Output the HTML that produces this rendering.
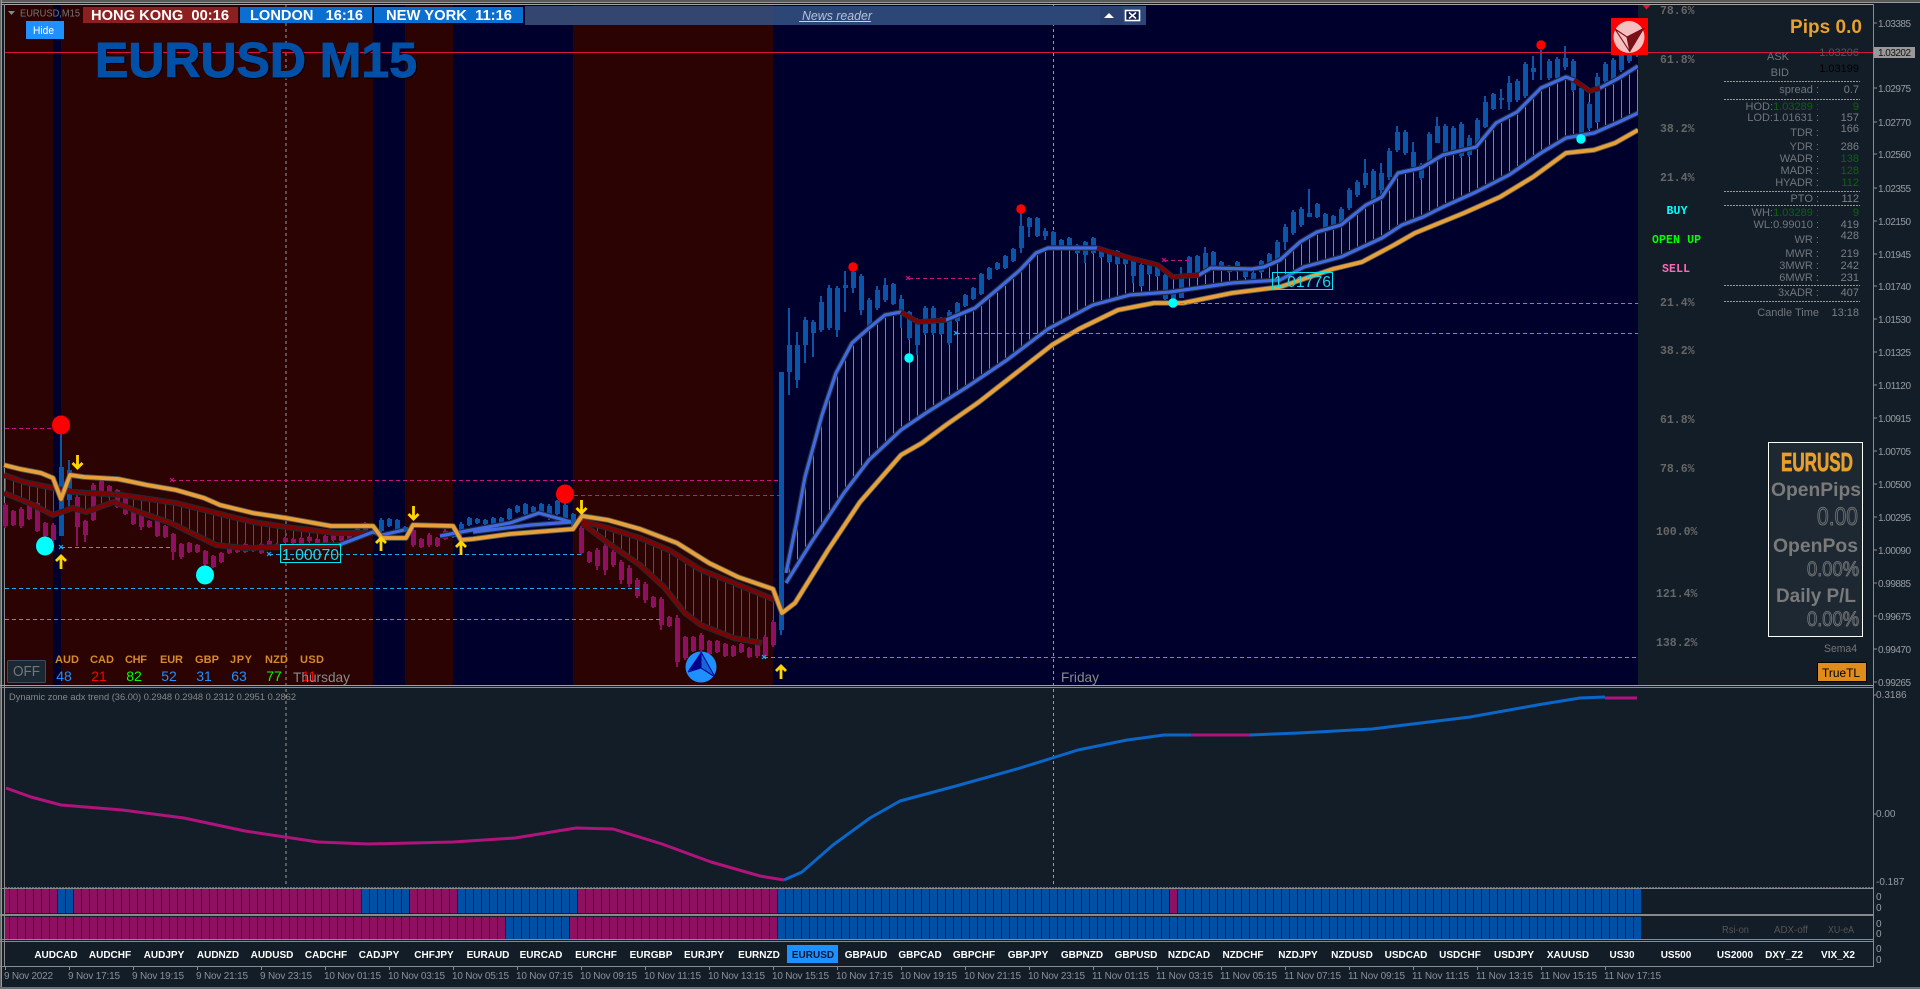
<!DOCTYPE html>
<html><head><meta charset="utf-8"><title>EURUSD M15</title>
<style>
html,body{margin:0;padding:0;background:#131d27;overflow:hidden}
svg{display:block}
text{font-family:"Liberation Sans",Arial,sans-serif;white-space:pre}
.ax{font-size:10px;fill:#979ca2}
.lb{font-size:11px;fill:#71767c;text-anchor:end}
.v{font-size:11px;fill:#7a7f85;text-anchor:end}
.g{fill:#0a640a}
.fb{font-family:"Liberation Mono",monospace;font-size:11.5px;fill:#666;font-weight:bold}
.sg{font-family:"Liberation Mono",monospace;font-size:11.5px;font-weight:bold}
.p{font-size:10px;font-weight:bold;fill:#fff;text-anchor:middle}
.t{font-size:10px;fill:#8b9096}
.cc{font-size:11px;font-weight:bold;fill:#d68a2e}
.cv{font-size:14px;text-anchor:middle}
.bar{font-size:14.5px;font-weight:bold;fill:#fff}
.big{font-weight:bold;fill:#7a7a7a}
.lcd{fill:#2a343e;stroke:#7d7d7d;stroke-width:.8}
</style></head>
<body>
<svg width="1920" height="989" viewBox="0 0 1920 989" xmlns="http://www.w3.org/2000/svg">
<defs>
<pattern id="hr" width="8" height="8" patternUnits="userSpaceOnUse"><rect x="5" width="1" height="8" fill="#c81e32"/></pattern>
<pattern id="hc" width="8" height="8" patternUnits="userSpaceOnUse"><rect x="5" width="1" height="8" fill="#1ea8e0"/></pattern>
<pattern id="gap" width="8" height="8" patternUnits="userSpaceOnUse"><rect x="1" width="1" height="8" fill="#131d27"/></pattern>
<path id="up" d="M0 7V-6M-5 -1L0 -6L5 -1" fill="none" stroke="#ffd700" stroke-width="2.8"/>
<path id="dn" d="M0 -7V6M-5 1L0 6L5 1" fill="none" stroke="#ffd700" stroke-width="2.8"/>
<path id="oA" d="M4 465L20 469 41 473 53 478 61 499 70 475 84 477 118 479 147 485 176 490 204 498 220 505 253 513 286 518 331 526 373 526 382 538 406 538 413 525 453 526 461 540 473 539 510 534 573 529 582 516 608 520 640 529 677 543 709 563 738 577 773 589 782 613 795 603 828 550 860 502 901 455 922 443 946 425 979 402 1020 370 1052 345 1079 329 1118 310 1154 303 1183 303 1232 293 1280 287 1333 269 1362 262 1394 245 1415 233 1464 213 1500 197 1533 177 1566 153 1594 150 1615 143 1638 130"/>
<path id="mU1" d="M4 475L24 482 53 488 73 492 122 495 176 503 212 512 253 522 286 527 335 533 373 533"/>
<path id="mL1" d="M4 493L29 503 53 515 73 508 86 512 114 502 139 512 171 523 216 545 245 548 286 547 339 545"/>
<path id="mU2" d="M582 521L608 528 640 538 669 550 701 570 734 583 775 600"/>
<path id="mL2" d="M582 523L608 543 640 565 664 587 685 613 701 625 734 638 762 643"/>
<path id="bL" d="M786 583L811 543 844 493 869 460 901 430 926 413 967 387 1007 360 1048 329 1093 305 1130 295 1170 292 1232 283 1280 280 1304 267 1341 257 1382 238 1402 225 1423 217 1443 207 1476 192 1509 175 1541 153 1566 138 1594 133 1619 122 1638 113"/>
<path id="bU" d="M786 573L797 520 805 477 822 415 836 373 852 343 869 328 885 315 901 312 918 322 946 320 975 308 999 288 1020 270 1036 253 1048 248 1097 248 1130 258 1158 265 1173 277 1199 275 1211 268 1252 269 1264 267 1280 260 1300 242 1317 232 1341 225 1366 205 1382 197 1398 173 1421 168 1443 155 1476 147 1496 123 1517 112 1541 88 1566 77 1574 80 1590 91 1600 88 1619 78 1638 66"/>
<path id="bS" d="M339 545L373 532 382 535 404 530M440 536L461 532 510 523 539 513 571 522M473 532L531 525 571 522"/>
</defs>

<!-- window -->
<rect width="1920" height="989" fill="#131d27"/>
<rect width="1920" height="2" fill="#5a5a5a"/>
<rect y="2" width="1920" height="1" fill="#999"/>
<rect y="4" width="1873" height="1" fill="#a5a5a5"/>
<rect width="1" height="989" fill="#666"/>
<rect x="1" width="1" height="989" fill="#999"/>
<rect x="4" y="4" width="1" height="962" fill="#8a8a8a"/>
<rect y="987" width="1920" height="2" fill="#6a7076"/>

<!-- sessions -->
<rect x="5" y="5" width="768" height="680" fill="#2b0303"/>
<rect x="53" y="5" width="8" height="680" fill="#00002c"/>
<rect x="373" y="5" width="32" height="680" fill="#00002c"/>
<rect x="453" y="5" width="120" height="680" fill="#00002c"/>
<rect x="773" y="5" width="865" height="680" fill="#00002c"/>

<!-- period separators -->
<path d="M286 5V887M1053.5 5V887" stroke="#9a9a9a" stroke-width="1" stroke-dasharray="3 3" fill="none"/>

<!-- histogram -->
<path d="M4 475L24 482 53 488 73 492 122 495 176 503 212 512 253 522 286 527 335 533 373 533 373 533 339 545 286 547 245 548 216 545 171 523 139 512 114 502 86 512 73 508 53 515 29 503 4 493Z" fill="url(#hr)"/>
<path d="M582 521L608 528 640 538 669 550 701 570 734 583 775 600 775 644 762 643 734 638 701 625 685 613 664 587 640 565 608 543 582 523Z" fill="url(#hr)"/>
<path d="M786 573L797 520 805 477 822 415 836 373 852 343 869 328 885 315 901 312 918 322 946 320 975 308 999 288 1020 270 1036 253 1048 248 1097 248 1130 258 1158 265 1173 277 1199 275 1211 268 1252 269 1264 267 1280 260 1300 242 1317 232 1341 225 1366 205 1382 197 1398 173 1421 168 1443 155 1476 147 1496 123 1517 112 1541 88 1566 77 1574 80 1590 91 1600 88 1619 78 1638 66 1638 113 1619 122 1594 133 1566 138 1541 153 1509 175 1476 192 1443 207 1423 217 1402 225 1382 238 1341 257 1304 267 1280 280 1232 283 1170 292 1130 295 1093 305 1048 329 1007 360 967 387 926 413 901 430 869 460 844 493 811 543 786 583Z" fill="url(#hc)"/>

<g shape-rendering="crispEdges">
<!-- purple candles wicks -->
<path stroke="#8f1060" stroke-width="2" fill="none" d="M5 503V528M13 510V526M21 507V528M29 500V520M37 502V532M45 522V538M53 523V542M77 493V546M85 520V542M93 483V521M101 480V493M109 485V498M117 489V508M125 497V515M133 510V525M141 510V530M149 520V528M157 517V537M165 525V538M173 533V560M181 543V559M189 542V553M197 544V553M205 550V566M213 555V568M221 552V563M229 545V554M237 545V553M245 543V553M253 546V552M261 543V554M269 540V547M277 543V548M285 537V543M293 538V544M301 537V546M309 536V542M317 538V545M325 535V545M333 532V541M341 533V542M349 533V540M357 528V536M365 522V532M413 528V547M421 538V548M429 533V547M437 537V547M445 529V540M581 526V555M589 551V563M597 548V570M605 543V575M613 550V567M621 560V584M629 565V587M637 578V598M645 582V603M653 596V608M661 597V630M669 616V627M677 615V667M685 636V660M693 636V652M701 633V652M709 640V655M717 640V653M725 643V657M733 645V657M741 643V653M749 647V658M757 642V658M765 635V658M773 620V647"/>
<!-- purple bodies -->
<path transform="translate(.5 0)" stroke="#8f1060" stroke-width="5" fill="none" d="M5 505V526M13 511V525M21 509V526M29 501V519M37 503V531M45 523V536M53 525V540M77 497V527M85 521V535M93 485V520M101 481V492M109 486V497M117 490V507M125 498V514M133 511V524M141 512V527M149 521V527M157 518V536M165 526V537M173 534V552M181 544V557M189 543V552M197 545V552M205 551V564M213 556V567M221 553V562M229 546V553M237 546V552M245 544V552M253 547V551M261 544V553M269 541V546M277 544V547M285 538V542M293 539V543M301 538V545M309 537V541M317 539V544M325 536V544M333 533V540M341 534V541M349 534V539M357 529V535M365 523V531M413 530V545M421 539V547M429 535V545M437 538V546M445 531V539M581 528V553M589 552V562M597 550V566M605 546V570M613 552V565M621 562V580M629 568V584M637 580V596M645 584V600M653 597V607M661 599V625M669 617V626M677 618V662M685 637V658M693 637V651M701 635V650M709 641V654M717 641V652M725 644V656M733 646V656M741 644V652M749 648V657M757 644V656M765 637V656M773 622V645"/>
<!-- blue candles wicks -->
<path stroke="#0a55a8" stroke-width="2" fill="none" d="M61 425V536M69 460V510M381 518V533M389 518V527M397 519V534M405 526V532M453 533V538M461 522V543M469 517V526M477 518V524M485 519V525M493 517V526M501 517V523M509 508V520M517 505V513M525 503V515M533 506V513M541 503V515M549 504V520M557 500V515M565 503V520M573 513V532M781 372V635M789 308V395M797 332V388M805 317V363M813 320V357M821 296V332M829 285V330M837 286V337M845 271V312M853 263V293M861 274V315M869 298V330M877 286V310M885 278V302M893 283V305M901 295V328M909 311V340M917 318V355M925 306V335M933 306V335M941 317V335M949 310V345M957 302V322M965 294V307M973 287V300M981 273V295M989 267V280M997 262V270M1005 255V269M1013 248V262M1021 213V253M1029 217V237M1037 217V237M1045 228V240M1053 231V248M1061 239V250M1069 237V249M1077 244V254M1085 241V263M1093 237V254M1101 247V258M1109 251V263M1117 250V265M1125 254V265M1133 259V283M1141 264V287M1149 260V275M1157 265V277M1165 274V300M1173 290V300M1181 267V298M1189 256V277M1197 255V275M1205 247V275M1213 251V268M1221 261V271M1229 265V273M1237 261V272M1245 269V278M1253 272V281M1261 260V273M1269 253V267M1277 240V263M1285 224V250M1293 210V235M1301 207V227M1309 189V217M1317 203V218M1325 213V230M1333 215V230M1341 207V227M1349 188V210M1357 180V197M1365 159V188M1373 169V202M1381 163V197M1389 148V180M1397 126V152M1405 130V155M1413 142V168M1421 163V180M1429 132V163M1437 117V143M1445 124V155M1453 126V155M1461 122V158M1469 135V157M1477 118V147M1485 96V128M1493 93V110M1501 89V109M1509 76V110M1517 79V102M1525 62V98M1533 56V80M1541 50V80M1549 59V80M1557 57V80M1565 46V70M1573 59V92M1581 86V135M1589 102V130M1597 73V123M1605 62V83M1613 58V85M1621 47V72M1629 43V63M1637 37V57"/>
<!-- blue bodies -->
<path transform="translate(.5 0)" stroke="#0a55a8" stroke-width="5" fill="none" d="M61 467V536M69 470V500M381 520V531M389 519V526M397 520V533M405 527V531M453 534V537M461 524V533M469 518V525M477 519V523M485 520V524M493 518V525M501 518V522M509 509V519M517 506V512M525 504V514M533 507V512M541 504V514M549 506V518M557 501V514M565 505V518M573 514V530M781 372V630M789 345V372M797 345V380M805 320V345M813 322V333M821 302V330M829 288V328M837 288V330M845 285V288M853 272V288M861 276V310M869 300V328M877 290V308M885 285V300M893 284V304M901 299V312M909 312V338M917 322V345M925 308V333M933 308V333M941 318V334M949 312V343M957 303V321M965 295V306M973 288V299M981 274V294M989 268V279M997 263V269M1005 256V268M1013 249V261M1021 226V248M1029 218V227M1037 218V236M1045 231V236M1053 232V247M1061 240V249M1069 238V248M1077 245V253M1085 242V255M1093 238V253M1101 248V257M1109 252V262M1117 251V264M1125 255V264M1133 260V276M1141 265V286M1149 261V274M1157 266V276M1165 275V299M1173 291V299M1181 274V298M1189 257V276M1197 256V274M1205 253V270M1213 252V267M1221 262V270M1229 266V272M1237 262V271M1245 270V277M1253 273V280M1261 261V272M1269 254V266M1277 242V261M1285 227V242M1293 212V233M1301 209V225M1309 213V217M1317 204V217M1325 214V229M1333 216V229M1341 209V225M1349 190V208M1357 182V195M1365 173V185M1373 171V200M1381 173V190M1389 151V177M1397 132V150M1405 132V153M1413 152V167M1421 165V178M1429 134V161M1437 126V143M1445 126V153M1453 128V153M1461 124V156M1469 138V155M1477 120V145M1485 102V127M1493 94V109M1501 98V100M1509 83V102M1517 81V100M1525 64V96M1533 68V72M1549 61V78M1557 59V78M1565 58V67M1573 61V90M1581 88V133M1589 104V128M1597 77V122M1605 64V81M1613 60V83M1621 50V70M1629 45V61M1637 39V55"/>
</g>

<!-- maroon MAs -->
<g fill="none" stroke-linejoin="round">
<g stroke="#1f2a30" stroke-width="6"><use href="#mU1"/><use href="#mL1"/><use href="#mU2"/><use href="#mL2"/></g>
<g stroke="#800000" stroke-width="3.6"><use href="#mU1"/><use href="#mL1"/><use href="#mU2"/><use href="#mL2"/></g>
<!-- blue MAs -->
<g stroke="#1f2a3a" stroke-width="5.5"><use href="#bU"/><use href="#bL"/><use href="#bS"/></g>
<g stroke="#4169e1" stroke-width="3.2"><use href="#bU"/><use href="#bL"/><use href="#bS"/></g>
<!-- maroon sections of upper line -->
<path d="M901 312L918 322 946 320M1097 248L1130 258 1158 265 1173 277 1199 275M1574 80L1590 91 1600 88" stroke="#800000" stroke-width="3.6"/>
<!-- orange -->
<use href="#oA" stroke="#5a5a50" stroke-width="5.5"/>
<use href="#oA" stroke="#e8a03a" stroke-width="3.8"/>
</g>

<!-- dashed levels -->
<g fill="none" stroke-width="1" stroke-dasharray="4 3">
<g stroke="#c8147f"><path d="M5 428.5H61M172 480.5H781M574 495.5H781M909 278.5H979M1164 260.5H1190"/></g>
<g stroke="#1eaaf0"><path d="M61 547.5H172M269 554.5H581M5 588.5H640M5 619.5H660M764 657.5H1650M956 333.5H1650M1173 303.5H1653"/></g>
</g>
<g stroke-width="1.2" fill="none">
<path stroke="#c8147f" d="M170 478l4 4m0-4l-4 4M906 276l4 4m0-4l-4 4M1162 258l4 4m0-4l-4 4"/>
<path stroke="#1eaaf0" d="M59 545l4 4m0-4l-4 4M267 552l4 4m0-4l-4 4M762 655l4 4m0-4l-4 4M954 331l4 4m0-4l-4 4"/>
</g>

<!-- bid line -->
<rect x="5" y="52" width="1868" height="1" fill="#dc143c"/>

<!-- dots -->
<g fill="#ff0000"><ellipse cx="61" cy="425" rx="9" ry="9.5"/><ellipse cx="565" cy="494" rx="9" ry="9.5"/><circle cx="853" cy="267" r="4.7"/><circle cx="1021" cy="209" r="4.7"/><circle cx="1541" cy="45" r="4.7"/></g>
<g fill="#00ffff"><ellipse cx="45" cy="546" rx="9" ry="9.5"/><ellipse cx="205" cy="575" rx="9" ry="9.5"/><circle cx="909" cy="358" r="4.7"/><circle cx="1173" cy="303" r="4.7"/><circle cx="1581" cy="139" r="4.7"/></g>

<!-- arrows -->
<use href="#dn" x="77.5" y="462"/><use href="#dn" x="413.5" y="513"/><use href="#dn" x="581.5" y="507"/>
<use href="#up" x="61" y="562"/><use href="#up" x="381" y="544"/><use href="#up" x="461" y="548"/><use href="#up" x="781" y="672"/>

<!-- price tags -->
<rect x="280.5" y="544.5" width="60" height="18" fill="none" stroke="#00e5ee"/>
<text x="282" y="560" font-size="16" fill="#19d9e6" textLength="57" lengthAdjust="spacingAndGlyphs">1.00070</text>
<rect x="1272.5" y="272.5" width="60" height="17" fill="none" stroke="#00e5ee"/>
<text x="1274" y="287" font-size="16" fill="#19d9e6" textLength="57" lengthAdjust="spacingAndGlyphs">1.01776</text>

<!-- blue logo -->
<circle cx="701" cy="667" r="15.5" fill="#1e90ff"/>
<path d="M701 652L688 671 701 668Z" fill="#00008b"/>
<path d="M701 652L715 677 701 668Z" fill="#1565d8" stroke="#00008b" stroke-width="1"/>
<path d="M688 672L701 668 715 677" stroke="#00008b" fill="none"/>

<!-- sidebar panel -->
<rect x="1638" y="5" width="235" height="680" fill="#131d27"/>
<rect x="1638" y="52" width="235" height="1" fill="#dc143c"/>
<path d="M1642.5 5H1650.6L1646.5 9.5Z" fill="#dc143c"/>

<!-- top-left -->
<path d="M8 11H15L11.5 15Z" fill="#888"/>
<text x="20" y="16.5" font-size="10" fill="#777" textLength="60" lengthAdjust="spacingAndGlyphs">EURUSD,M15</text>
<rect x="26" y="21" width="38" height="18" fill="#1e90ff"/>
<text x="33" y="34" font-size="11" fill="#fff" textLength="21" lengthAdjust="spacingAndGlyphs">Hide</text>
<text x="96" y="78" font-size="49" font-weight="bold" fill="#000" stroke="#000" stroke-width="1" textLength="322" lengthAdjust="spacingAndGlyphs">EURUSD M15</text>
<text x="95" y="77" font-size="49" font-weight="bold" fill="#0050a8" stroke="#0050a8" stroke-width="1" textLength="322" lengthAdjust="spacingAndGlyphs">EURUSD M15</text>

<!-- sessions bar -->
<rect x="83" y="7" width="155" height="16" fill="#8b2020"/>
<rect x="240" y="7" width="132" height="16" fill="#0a6fd0"/>
<rect x="374" y="7" width="149" height="16" fill="#0a6fd0"/>
<text class="bar" x="91" y="20" textLength="138" lengthAdjust="spacingAndGlyphs">HONG KONG  00:16</text>
<text class="bar" x="250" y="20" textLength="113" lengthAdjust="spacingAndGlyphs">LONDON   16:16</text>
<text class="bar" x="386" y="20" textLength="126" lengthAdjust="spacingAndGlyphs">NEW YORK  11:16</text>

<!-- news bar -->
<rect x="525" y="6" width="248" height="19" fill="#34466f"/>
<rect x="773" y="6" width="373" height="19" fill="#2d4678"/>
<rect x="1100" y="6" width="23" height="19" fill="#2a4070"/>
<text x="802" y="20" font-size="13" font-style="italic" fill="#b6c2d6" textLength="70" lengthAdjust="spacingAndGlyphs">News reader</text>
<rect x="799" y="21" width="72" height="1" fill="#c8d2e2"/>
<path d="M1104 18H1114L1109 13Z" fill="#fff"/>
<rect x="1125.5" y="10.5" width="14" height="10" fill="#10204a" stroke="#fff" stroke-width="1.6"/>
<path d="M1129 12.5L1136 18.5M1136 12.5L1129 18.5" stroke="#fff" stroke-width="1.5"/>

<!-- tron logo -->
<rect x="1611" y="18" width="37" height="37" fill="#ff0000"/>
<ellipse cx="1629" cy="37" rx="15.5" ry="16" fill="#f7c0c0"/>
<path d="M1644.5 28L1627 37 1630 52Z" fill="#7a1018"/>
<path d="M1615 29L1627 37 1644.5 28M1615 29L1630 52M1619 35L1630 52M1615 29L1627 37 1630 52" fill="none" stroke="#7a1018" stroke-width="1.1"/>

<!-- fib labels -->
<text class="fb" x="1660" y="14">78.6%</text><text class="fb" x="1660" y="63">61.8%</text><text class="fb" x="1660" y="132">38.2%</text><text class="fb" x="1660" y="181">21.4%</text><text class="fb" x="1660" y="306">21.4%</text><text class="fb" x="1660" y="354">38.2%</text><text class="fb" x="1660" y="423">61.8%</text><text class="fb" x="1660" y="472">78.6%</text><text class="fb" x="1656" y="535">100.0%</text><text class="fb" x="1656" y="597">121.4%</text><text class="fb" x="1656" y="646">138.2%</text>
<text class="sg" x="1666.5" y="214" fill="#00ffff" textLength="21">BUY</text>
<text class="sg" x="1652" y="243" fill="#00ff00" textLength="49">OPEN UP</text>
<text class="sg" x="1662" y="272" fill="#ff69b4" textLength="28">SELL</text>

<!-- info panel -->
<text x="1790" y="33" font-size="19" font-weight="bold" fill="#e8a030" textLength="72">Pips 0.0</text>
<text class="lb" x="1789" y="60">ASK</text><text class="lb" x="1789" y="76">BID</text>
<text x="1859" y="56" font-size="11" fill="#555" text-anchor="end">1.03206</text>
<text x="1859" y="72" font-size="11" fill="#000" text-anchor="end">1.03199</text>
<g stroke="#9a9a9a" stroke-width="1" stroke-dasharray="2 1"><path d="M1724 81.5H1860M1724 99.5H1860M1724 191.5H1860M1724 205.5H1860M1724 285.5H1860M1724 301.5H1860"/></g>
<text class="lb" x="1819" y="93">spread :</text><text class="v" x="1859" y="93">0.7</text>
<text class="lb" x="1773" y="110">HOD:</text><text class="lb g" x="1819" y="110">1.03289 :</text><text class="v g" x="1859" y="110">9</text>
<text class="lb" x="1773" y="121">LOD:</text><text class="lb" x="1819" y="121">1.01631 :</text><text class="v" x="1859" y="121">157</text>
<text class="lb" x="1819" y="136">TDR :</text><text class="v" x="1859" y="132">166</text>
<text class="lb" x="1819" y="150">YDR :</text><text class="v" x="1859" y="150">286</text>
<text class="lb" x="1819" y="162">WADR :</text><text class="v g" x="1859" y="162">138</text>
<text class="lb" x="1819" y="174">MADR :</text><text class="v g" x="1859" y="174">128</text>
<text class="lb" x="1819" y="186">HYADR :</text><text class="v g" x="1859" y="186">112</text>
<text class="lb" x="1819" y="202">PTO :</text><text class="v" x="1859" y="202">112</text>
<text class="lb" x="1773" y="216">WH:</text><text class="lb g" x="1819" y="216">1.03289 :</text><text class="v g" x="1859" y="216">9</text>
<text class="lb" x="1773" y="228">WL:</text><text class="lb" x="1819" y="228">0.99010 :</text><text class="v" x="1859" y="228">419</text>
<text class="lb" x="1819" y="243">WR :</text><text class="v" x="1859" y="239">428</text>
<text class="lb" x="1819" y="257">MWR :</text><text class="v" x="1859" y="257">219</text>
<text class="lb" x="1819" y="269">3MWR :</text><text class="v" x="1859" y="269">242</text>
<text class="lb" x="1819" y="281">6MWR :</text><text class="v" x="1859" y="281">231</text>
<text class="lb" x="1819" y="296">3xADR :</text><text class="v" x="1859" y="296">407</text>
<text class="lb" x="1819" y="316">Candle Time</text><text class="v" x="1859" y="316">13:18</text>

<!-- stats box -->
<rect x="1768.5" y="442.5" width="94" height="194" fill="#1d2832" stroke="#fff" stroke-width="1"/>
<text x="1781" y="471" font-size="26" font-weight="bold" fill="#e8a02c" stroke="#e8a02c" stroke-width=".7" textLength="72" lengthAdjust="spacingAndGlyphs">EURUSD</text>
<text class="big" x="1771" y="496" font-size="19" textLength="90" lengthAdjust="spacingAndGlyphs">OpenPips</text>
<text class="lcd" x="1817" y="525" font-size="25" textLength="41" lengthAdjust="spacingAndGlyphs">0.00</text>
<text class="big" x="1773" y="552" font-size="19" textLength="85" lengthAdjust="spacingAndGlyphs">OpenPos</text>
<text class="lcd" x="1807" y="576" font-size="21" textLength="52" lengthAdjust="spacingAndGlyphs">0.00%</text>
<text class="big" x="1776" y="602" font-size="19" textLength="80" lengthAdjust="spacingAndGlyphs">Daily P/L</text>
<text class="lcd" x="1807" y="626" font-size="21" textLength="52" lengthAdjust="spacingAndGlyphs">0.00%</text>
<text x="1824" y="652" font-size="11" fill="#777" textLength="33" lengthAdjust="spacingAndGlyphs">Sema4</text>
<rect x="1817.5" y="662.5" width="49" height="19" rx="1" fill="#e08c1c" stroke="#000"/>
<text x="1822" y="677" font-size="12" fill="#000" textLength="38" lengthAdjust="spacingAndGlyphs">TrueTL</text>

<!-- currency strength -->
<text class="cc" x="55" y="663" textLength="24">AUD</text><text class="cc" x="90" y="663" textLength="24">CAD</text><text class="cc" x="125" y="663" textLength="22">CHF</text><text class="cc" x="160" y="663" textLength="23">EUR</text><text class="cc" x="195" y="663" textLength="24">GBP</text><text class="cc" x="230" y="663" textLength="22">JPY</text><text class="cc" x="265" y="663" textLength="23">NZD</text><text class="cc" x="300" y="663" textLength="24">USD</text>
<text class="cv" x="64" y="681" fill="#1e90ff">48</text><text class="cv" x="99" y="681" fill="#ff0000">21</text><text class="cv" x="134" y="681" fill="#00ff00">82</text><text class="cv" x="169" y="681" fill="#1e90ff">52</text><text class="cv" x="204" y="681" fill="#1e90ff">31</text><text class="cv" x="239" y="681" fill="#1e90ff">63</text><text class="cv" x="274" y="681" fill="#00ff00">77</text><text class="cv" x="309" y="681" fill="#ff0000">11</text>
<rect x="7.5" y="660.5" width="38" height="22" rx="1" fill="#1a2833" stroke="#3d4d5b"/>
<text x="13" y="676" font-size="15" fill="#777" textLength="27" lengthAdjust="spacingAndGlyphs">OFF</text>
<text x="293" y="682" font-size="14" fill="#8a8a8a" textLength="57" lengthAdjust="spacingAndGlyphs">Thursday</text>
<text x="1061" y="682" font-size="14" fill="#8a8a8a" textLength="38" lengthAdjust="spacingAndGlyphs">Friday</text>

<!-- separators -->
<rect x="0" y="685" width="1873" height="1" fill="#a0a0a0"/>
<rect x="0" y="687" width="1873" height="1" fill="#8a8a8a"/>
<rect x="1873" y="4" width="1" height="962" fill="#8a8a8a"/>

<!-- ADX window -->
<text x="9" y="700" font-size="9.5" fill="#888" textLength="287" lengthAdjust="spacingAndGlyphs">Dynamic zone adx trend (36.00) 0.2948 0.2948 0.2312 0.2951 0.2862</text>
<g fill="none" stroke-width="3" stroke-linejoin="round">
<path stroke="#0a66c8" d="M784 880L802 872 833 845 870 818 900 801 956 786 1017 769 1078 750 1127 740 1164 735 1191 735M1250 735L1299 733 1372 729 1470 717 1543 704 1580 698 1605 697"/>
<path stroke="#b0147c" d="M6 788L31 797 61 805 122 810 184 818 245 831 318 842 368 844 453 842 515 838 576 828 613 829 662 844 711 862 760 876 784 880M1191 735L1250 735M1605 698H1637"/>
</g>
<text class="ax" x="1876" y="698">0.3186</text>
<text class="ax" x="1876" y="817">0.00</text>
<text class="ax" x="1876" y="885">-0.187</text>
<path d="M1873 695h3M1873 814h3" stroke="#8a8a8a"/>
<path d="M5 887.5H1873" stroke="#5a7090" stroke-dasharray="2 1"/>
<rect x="0" y="888" width="1873" height="1" fill="#8a8a8a"/>

<!-- signal rows -->
<rect x="5" y="889" width="1637" height="24" fill="#8f1060"/>
<g fill="#0050a5"><rect x="58" y="889" width="16" height="24"/><rect x="362" y="889" width="48" height="24"/><rect x="458" y="889" width="120" height="24"/><rect x="778" y="889" width="392" height="24"/><rect x="1178" y="889" width="464" height="24"/></g>
<rect x="5" y="889" width="1637" height="24" fill="url(#gap)"/>
<rect x="5" y="917" width="1637" height="22" fill="#8f1060"/>
<g fill="#0050a5"><rect x="506" y="917" width="64" height="22"/><rect x="778" y="917" width="864" height="22"/></g>
<rect x="5" y="917" width="1637" height="22" fill="url(#gap)"/>
<rect x="0" y="914" width="1873" height="2" fill="#8a8a8a"/>
<rect x="0" y="939" width="1873" height="1" fill="#8a8a8a"/>
<rect x="0" y="941" width="1873" height="1" fill="#8a8a8a"/>
<rect x="0" y="966" width="1874" height="1" fill="#8a8a8a"/>
<text class="ax" x="1876" y="900">0</text><text class="ax" x="1876" y="911">0</text><text class="ax" x="1876" y="927">0</text><text class="ax" x="1876" y="937">0</text><text class="ax" x="1876" y="952">0</text><text class="ax" x="1876" y="963">0</text>
<text x="1722" y="933" font-size="10" fill="#555" textLength="27" lengthAdjust="spacingAndGlyphs">Rsi-on</text>
<text x="1774" y="933" font-size="10" fill="#555" textLength="34" lengthAdjust="spacingAndGlyphs">ADX-off</text>
<text x="1828" y="933" font-size="10" fill="#555" textLength="26" lengthAdjust="spacingAndGlyphs">XU-eA</text>

<!-- pair row -->
<rect x="787" y="945" width="51" height="18" fill="#1e90ff"/>
<text class="p" x="56" y="958">AUDCAD</text><text class="p" x="110" y="958">AUDCHF</text><text class="p" x="164" y="958">AUDJPY</text><text class="p" x="218" y="958">AUDNZD</text><text class="p" x="272" y="958">AUDUSD</text><text class="p" x="326" y="958">CADCHF</text><text class="p" x="379" y="958">CADJPY</text><text class="p" x="434" y="958">CHFJPY</text><text class="p" x="488" y="958">EURAUD</text><text class="p" x="541" y="958">EURCAD</text><text class="p" x="596" y="958">EURCHF</text><text class="p" x="651" y="958">EURGBP</text><text class="p" x="704" y="958">EURJPY</text><text class="p" x="759" y="958">EURNZD</text><text class="p" x="813" y="958" style="fill:#0a1a30">EURUSD</text><text class="p" x="866" y="958">GBPAUD</text><text class="p" x="920" y="958">GBPCAD</text><text class="p" x="974" y="958">GBPCHF</text><text class="p" x="1028" y="958">GBPJPY</text><text class="p" x="1082" y="958">GBPNZD</text><text class="p" x="1136" y="958">GBPUSD</text><text class="p" x="1189" y="958">NZDCAD</text><text class="p" x="1243" y="958">NZDCHF</text><text class="p" x="1298" y="958">NZDJPY</text><text class="p" x="1352" y="958">NZDUSD</text><text class="p" x="1406" y="958">USDCAD</text><text class="p" x="1460" y="958">USDCHF</text><text class="p" x="1514" y="958">USDJPY</text><text class="p" x="1568" y="958">XAUUSD</text><text class="p" x="1622" y="958">US30</text><text class="p" x="1676" y="958">US500</text><text class="p" x="1735" y="958">US2000</text><text class="p" x="1784" y="958">DXY_Z2</text><text class="p" x="1838" y="958">VIX_X2</text>

<!-- time axis -->
<path d="M5.5 966v4M69.5 966v4M133.5 966v4M197.5 966v4M261.5 966v4M325.5 966v4M389.5 966v4M453.5 966v4M517.5 966v4M581.5 966v4M645.5 966v4M709.5 966v4M773.5 966v4M837.5 966v4M901.5 966v4M965.5 966v4M1029.5 966v4M1093.5 966v4M1157.5 966v4M1221.5 966v4M1285.5 966v4M1349.5 966v4M1413.5 966v4M1477.5 966v4M1541.5 966v4M1605.5 966v4" stroke="#8a8a8a"/>
<text class="t" x="4" y="979" textLength="49">9 Nov 2022</text><text class="t" x="68" y="979" textLength="52">9 Nov 17:15</text><text class="t" x="132" y="979" textLength="52">9 Nov 19:15</text><text class="t" x="196" y="979" textLength="52">9 Nov 21:15</text><text class="t" x="260" y="979" textLength="52">9 Nov 23:15</text><text class="t" x="324" y="979" textLength="57">10 Nov 01:15</text><text class="t" x="388" y="979" textLength="57">10 Nov 03:15</text><text class="t" x="452" y="979" textLength="57">10 Nov 05:15</text><text class="t" x="516" y="979" textLength="57">10 Nov 07:15</text><text class="t" x="580" y="979" textLength="57">10 Nov 09:15</text><text class="t" x="644" y="979" textLength="57">10 Nov 11:15</text><text class="t" x="708" y="979" textLength="57">10 Nov 13:15</text><text class="t" x="772" y="979" textLength="57">10 Nov 15:15</text><text class="t" x="836" y="979" textLength="57">10 Nov 17:15</text><text class="t" x="900" y="979" textLength="57">10 Nov 19:15</text><text class="t" x="964" y="979" textLength="57">10 Nov 21:15</text><text class="t" x="1028" y="979" textLength="57">10 Nov 23:15</text><text class="t" x="1092" y="979" textLength="57">11 Nov 01:15</text><text class="t" x="1156" y="979" textLength="57">11 Nov 03:15</text><text class="t" x="1220" y="979" textLength="57">11 Nov 05:15</text><text class="t" x="1284" y="979" textLength="57">11 Nov 07:15</text><text class="t" x="1348" y="979" textLength="57">11 Nov 09:15</text><text class="t" x="1412" y="979" textLength="57">11 Nov 11:15</text><text class="t" x="1476" y="979" textLength="57">11 Nov 13:15</text><text class="t" x="1540" y="979" textLength="57">11 Nov 15:15</text><text class="t" x="1604" y="979" textLength="57">11 Nov 17:15</text>

<!-- price axis -->
<path d="M1874 23h3M1874 88h3M1874 122h3M1874 154h3M1874 188h3M1874 221h3M1874 254h3M1874 286h3M1874 319h3M1874 352h3M1874 385h3M1874 418h3M1874 451h3M1874 484h3M1874 517h3M1874 550h3M1874 583h3M1874 616h3M1874 649h3M1874 682h3" stroke="#8a8a8a"/>
<text class="ax" x="1878" y="27" textLength="33">1.03385</text><text class="ax" x="1878" y="92" textLength="33">1.02975</text><text class="ax" x="1878" y="126" textLength="33">1.02770</text><text class="ax" x="1878" y="158" textLength="33">1.02560</text><text class="ax" x="1878" y="192" textLength="33">1.02355</text><text class="ax" x="1878" y="225" textLength="33">1.02150</text><text class="ax" x="1878" y="258" textLength="33">1.01945</text><text class="ax" x="1878" y="290" textLength="33">1.01740</text><text class="ax" x="1878" y="323" textLength="33">1.01530</text><text class="ax" x="1878" y="356" textLength="33">1.01325</text><text class="ax" x="1878" y="389" textLength="33">1.01120</text><text class="ax" x="1878" y="422" textLength="33">1.00915</text><text class="ax" x="1878" y="455" textLength="33">1.00705</text><text class="ax" x="1878" y="488" textLength="33">1.00500</text><text class="ax" x="1878" y="521" textLength="33">1.00295</text><text class="ax" x="1878" y="554" textLength="33">1.00090</text><text class="ax" x="1878" y="587" textLength="33">0.99885</text><text class="ax" x="1878" y="620" textLength="33">0.99675</text><text class="ax" x="1878" y="653" textLength="33">0.99470</text><text class="ax" x="1878" y="686" textLength="33">0.99265</text>
<rect x="1874" y="47" width="41" height="11" fill="#999"/>
<text x="1878" y="56" font-size="10" fill="#111" textLength="33">1.03202</text>
</svg>
</body></html>
